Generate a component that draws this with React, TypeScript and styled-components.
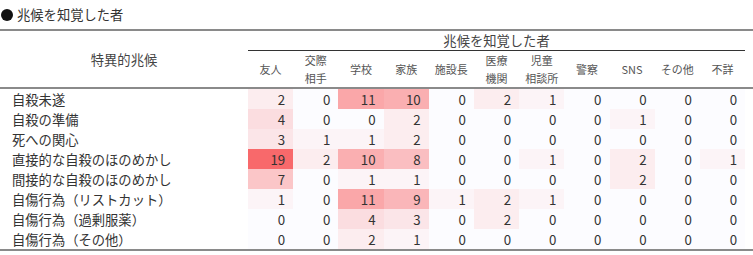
import React from "react";
import styled, { createGlobalStyle } from "styled-components";

const GlobalStyle = createGlobalStyle`
  body {
    margin: 0;
    background: #fff;
  }
`;

const columns = [
  ["友人"],
  ["交際", "相手"],
  ["学校"],
  ["家族"],
  ["施設長"],
  ["医療", "機関"],
  ["児童", "相談所"],
  ["警察"],
  ["SNS"],
  ["その他"],
  ["不詳"],
];

const rows: { label: string; values: number[] }[] = [
  { label: "自殺未遂", values: [2, 0, 11, 10, 0, 2, 1, 0, 0, 0, 0] },
  { label: "自殺の準備", values: [4, 0, 0, 2, 0, 0, 0, 0, 1, 0, 0] },
  { label: "死への関心", values: [3, 1, 1, 2, 0, 0, 0, 0, 0, 0, 0] },
  { label: "直接的な自殺のほのめかし", values: [19, 2, 10, 8, 0, 0, 1, 0, 2, 0, 1] },
  { label: "間接的な自殺のほのめかし", values: [7, 0, 1, 1, 0, 0, 0, 0, 2, 0, 0] },
  { label: "自傷行為（リストカット）", values: [1, 0, 11, 9, 1, 2, 1, 0, 0, 0, 0] },
  { label: "自傷行為（過剰服薬）", values: [0, 0, 4, 3, 0, 2, 0, 0, 0, 0, 0] },
  { label: "自傷行為（その他）", values: [0, 0, 2, 1, 0, 0, 0, 0, 0, 0, 0] },
];

const MAX = 19;

// white -> red colour scale, like a spreadsheet heat map
const heat = (v: number) => {
  const t = v / MAX;
  const mix = (a: number, b: number) => Math.round(a + (b - a) * t);
  return `rgb(${mix(252, 248)}, ${mix(252, 105)}, ${mix(255, 107)})`;
};

const GRID = "248px repeat(11, 45.2px) 1fr";

const Page = styled.div`
  width: 753px;
  font-family: "Noto Sans CJK JP", "Noto Sans", sans-serif;
  color: #333;
`;

const Title = styled.div`
  height: 29px;
  display: flex;
  align-items: center;
  gap: 4px;
  padding-left: 1px;
  font-size: 13.3px;
  color: #333;
`;

const Bullet = styled.span`
  width: 12px;
  height: 12px;
  border-radius: 50%;
  background: #111;
`;

const Head = styled.div`
  display: grid;
  grid-template-columns: ${GRID};
  grid-template-rows: 20px 36px;
  border-top: 2px solid #8a8a8a;
  border-bottom: 2px solid #8a8a8a;
`;

const CornerCell = styled.div`
  grid-row: 1 / span 2;
  grid-column: 1;
  display: flex;
  align-items: center;
  justify-content: center;
  font-size: 13.3px;
  color: #444;
`;

const GroupCell = styled.div`
  grid-row: 1;
  grid-column: 2 / span 11;
  display: flex;
  align-items: center;
  justify-content: center;
  font-size: 13.3px;
  color: #444;
  border-bottom: 1px solid #333;
`;

const SubCell = styled.div`
  grid-row: 2;
  display: flex;
  flex-direction: column;
  align-items: center;
  justify-content: center;
  font-size: 11px;
  line-height: 18px;
  color: #555;
`;

const Body = styled.div`
  border-bottom: 2px solid #8a8a8a;
`;

const Row = styled.div`
  display: grid;
  grid-template-columns: ${GRID};
  height: 20px;
`;

const Label = styled.div`
  padding-left: 12px;
  display: flex;
  align-items: center;
  font-size: 13.3px;
  color: #333;
  white-space: nowrap;
`;

const Value = styled.div`
  display: flex;
  align-items: center;
  justify-content: flex-end;
  padding-right: 8px;
  font-size: 13.3px;
  color: #333;
`;

export default function App() {
  return (
    <>
      <GlobalStyle />
      <Page>
        <Title>
          <Bullet />
          兆候を知覚した者
        </Title>
        <Head>
          <CornerCell>特異的兆候</CornerCell>
          <GroupCell>兆候を知覚した者</GroupCell>
          {columns.map((lines, i) => (
            <SubCell key={i} style={{ gridColumn: i + 2 }}>
              {lines.map((l) => (
                <span key={l}>{l}</span>
              ))}
            </SubCell>
          ))}
        </Head>
        <Body>
          {rows.map((r) => (
            <Row key={r.label}>
              <Label>{r.label}</Label>
              {r.values.map((v, i) => (
                <Value key={i} style={{ background: heat(v) }}>
                  {v}
                </Value>
              ))}
            </Row>
          ))}
        </Body>
      </Page>
    </>
  );
}
